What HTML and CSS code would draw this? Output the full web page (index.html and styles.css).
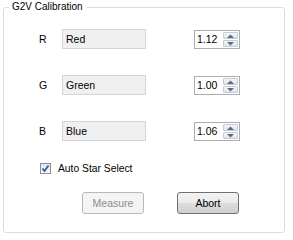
FILE: index.html
```html
<!DOCTYPE html>
<html>
<head>
<meta charset="utf-8">
<link rel="stylesheet" href="styles.css">
</head>
<body>
<fieldset class="group">
  <legend class="group-title">G2V Calibration</legend>
  <div class="channels">
    <span class="ch-label">R</span>
    <span class="name-box">Red</span>
    <span class="spin"><span class="spin-value">1.12</span><span class="spin-btns"><span class="spin-up"><svg width="7" height="4" viewBox="0 0 7 4"><path d="M0 4 L3.5 0.5 L7 4 Z" fill="#5a6a86"/></svg></span><span class="spin-down"><svg width="7" height="4" viewBox="0 0 7 4"><path d="M0 0 L3.5 3.5 L7 0 Z" fill="#5a6a86"/></svg></span></span></span>

    <span class="ch-label">G</span>
    <span class="name-box">Green</span>
    <span class="spin"><span class="spin-value">1.00</span><span class="spin-btns"><span class="spin-up"><svg width="7" height="4" viewBox="0 0 7 4"><path d="M0 4 L3.5 0.5 L7 4 Z" fill="#5a6a86"/></svg></span><span class="spin-down"><svg width="7" height="4" viewBox="0 0 7 4"><path d="M0 0 L3.5 3.5 L7 0 Z" fill="#5a6a86"/></svg></span></span></span>

    <span class="ch-label">B</span>
    <span class="name-box">Blue</span>
    <span class="spin"><span class="spin-value">1.06</span><span class="spin-btns"><span class="spin-up"><svg width="7" height="4" viewBox="0 0 7 4"><path d="M0 4 L3.5 0.5 L7 4 Z" fill="#5a6a86"/></svg></span><span class="spin-down"><svg width="7" height="4" viewBox="0 0 7 4"><path d="M0 0 L3.5 3.5 L7 0 Z" fill="#5a6a86"/></svg></span></span></span>
  </div>
  <div class="check-row">
    <span class="checkbox"><svg width="9" height="9" viewBox="0 0 9 9"><path d="M1.5 4.5 L3.5 7 L7.5 1.5" fill="none" stroke="#3f5a96" stroke-width="1.8"/></svg></span>
    <span class="check-label">Auto Star Select</span>
  </div>
  <div class="actions">
    <span class="btn btn-disabled">Measure</span>
    <span class="btn btn-normal">Abort</span>
  </div>
</fieldset>
</body>
</html>
```

FILE: styles.css
```css
html, body {
  margin: 0;
  padding: 0;
  background: #ffffff;
}
body {
  width: 293px;
  height: 240px;
  overflow: hidden;
  font-family: "Liberation Sans", Arial, sans-serif;
  font-size: 10px;
  color: #000;
}
.group {
  box-sizing: border-box;
  margin: 1px 0 0 3px;
  width: 282px;
  height: 232px;
  padding: 0;
  border: 1px solid #d8dde1;
  border-radius: 3px;
}
.group-title {
  margin-left: 5px;
  padding: 0 4px 0 3px;
  line-height: 12px;
  height: 12px;
}
.channels {
  display: grid;
  grid-template-columns: 23px 84px 94px;
  grid-auto-rows: 20px;
  row-gap: 26px;
  align-items: center;
  margin: 16px 0 0 35px;
}
.ch-label {
  font-size: 10.5px;
}
.name-box {
  box-sizing: border-box;
  height: 20px;
  background: #f0f0f0;
  border: 1px solid #d5d5d5;
  padding: 0 0 0 3px;
  line-height: 18px;
  font-size: 10.5px;
}
.spin {
  justify-self: end;
  box-sizing: border-box;
  width: 46px;
  height: 19px;
  margin-top: 1px;
  border: 1px solid #abadb3;
  background: #fff;
  display: flex;
  justify-content: space-between;
  padding: 1px 1px 1px 2px;
}
.spin-value {
  line-height: 15px;
  font-size: 10.5px;
}
.spin-btns {
  display: flex;
  flex-direction: column;
  width: 15px;
  gap: 1px;
}
.spin-up, .spin-down {
  flex: 1;
  display: flex;
  align-items: center;
  justify-content: center;
  border: 1px solid #c5ccd6;
  border-radius: 1px;
  background: linear-gradient(#f4f6f9, #dfe4ec);
}
.spin-up svg, .spin-down svg {
  display: block;
}
.check-row {
  display: flex;
  align-items: center;
  gap: 7px;
  margin: 21px 0 0 36px;
  height: 12px;
}
.checkbox {
  box-sizing: border-box;
  width: 11px;
  height: 11px;
  border: 1px solid #8f8f8f;
  background: linear-gradient(#dfe6f1, #f5f7fb);
  display: flex;
  align-items: center;
  justify-content: center;
}
.checkbox svg {
  display: block;
}
.check-label {
  font-size: 10.3px;
}
.actions {
  display: flex;
  gap: 33px;
  margin: 18px 0 0 78px;
}
.btn {
  box-sizing: border-box;
  width: 62px;
  height: 22px;
  border-radius: 3px;
  display: flex;
  align-items: center;
  justify-content: center;
  font-size: 10.5px;
}
.btn-disabled {
  border: 1px solid #b5b9bc;
  background: #f4f4f4;
  color: #8d8d8d;
}
.btn-normal {
  border: 1px solid #707070;
  background: linear-gradient(#f2f2f2 0%, #ebebeb 50%, #dddddd 51%, #cfcfcf 100%);
  color: #000;
}
```
